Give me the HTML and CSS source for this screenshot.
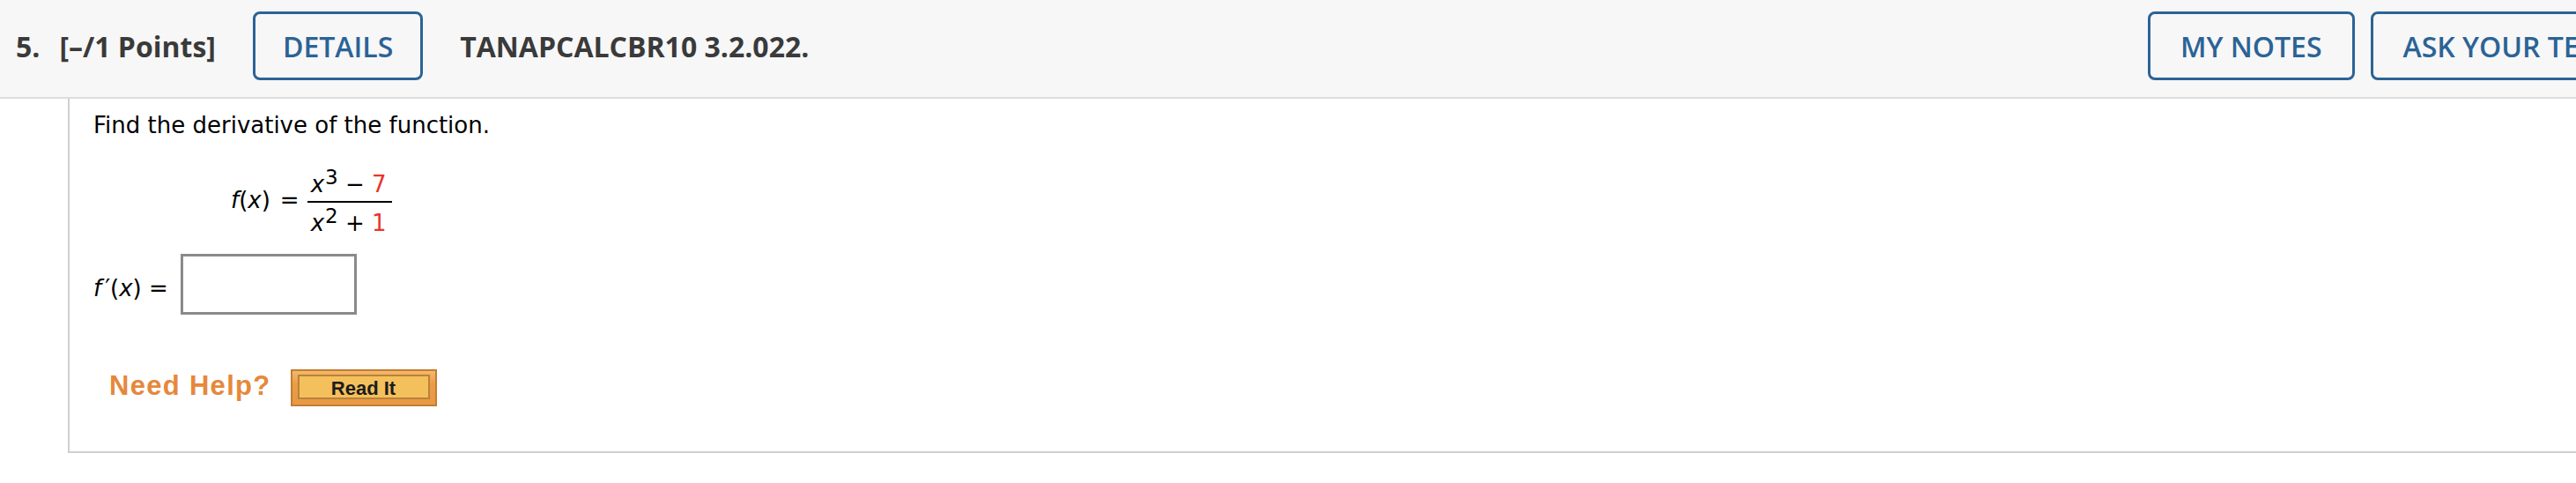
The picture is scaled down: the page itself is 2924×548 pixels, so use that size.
FILE: index.html
```html
<!DOCTYPE html>
<html lang="en">
<head>
<meta charset="utf-8">
<title>Question 5</title>
<link rel="stylesheet" href="styles.css">
</head>
<body>
<div class="page">
  <header class="q-header">
    <div class="q-left">
      <span class="q-num">5.</span>
      <span class="q-points">[–/1 Points]</span>
      <button class="hbtn details" type="button">DETAILS</button>
      <span class="q-code">TANAPCALCBR10 3.2.022.</span>
    </div>
    <div class="q-right">
      <button class="hbtn" type="button">MY NOTES</button>
      <button class="hbtn" type="button">ASK YOUR TEACHER</button>
    </div>
  </header>
  <section class="q-body">
    <p class="prompt">Find the derivative of the function.</p>
    <div class="formula">
      <span class="lhs"><i>f</i>(<i>x</i>)</span>
      <span class="eq">=</span>
      <span class="frac">
        <span class="num"><i>x</i><sup>3</sup> − <span class="rnd">7</span></span>
        <span class="bar"></span>
        <span class="den"><i>x</i><sup>2</sup> + <span class="rnd">1</span></span>
      </span>
    </div>
    <div class="answer-row">
      <span class="ans-label"><i>f</i><span class="prime">′</span>(<i>x</i>) =</span>
      <input class="ans-input" type="text" aria-label="answer">
    </div>
    <div class="help-row">
      <span class="need-help">Need Help?</span>
      <span class="read-it"><span class="read-it-inner">Read It</span></span>
    </div>
  </section>
</div>
</body>
</html>
```

FILE: styles.css
```css
html, body {
  margin: 0;
  padding: 0;
  background: #ffffff;
  overflow: hidden;
}

.page {
  width: 3200px;
}

.q-header {
  display: flex;
  align-items: center;
  height: 78px;
  padding: 13px 0 19px 18px;
  background: #f7f7f7;
  border-bottom: 2px solid #dddddd;
  font-family: "Open Sans", "DejaVu Sans", sans-serif;
  font-size: 32px;
  color: #3a3a3a;
}

.q-left {
  display: flex;
  align-items: center;
  flex: 0 0 2420px;
}

.q-right {
  display: flex;
  align-items: center;
  gap: 18px;
}

.q-num,
.q-points,
.q-code {
  font-weight: 700;
  white-space: nowrap;
}

.q-points {
  margin-left: 22px;
}

.hbtn {
  display: flex;
  align-items: center;
  height: 78px;
  box-sizing: border-box;
  margin: 0;
  padding: 0 34px;
  border: 3px solid #2b6396;
  border-radius: 8px;
  background: transparent;
  color: #2b6396;
  font-family: "Open Sans", "DejaVu Sans", sans-serif;
  font-size: 32px;
  font-weight: 600;
  white-space: nowrap;
}

.details {
  margin-left: 42px;
  padding: 0 31px;
}

.q-code {
  margin-left: 42px;
}

.q-body {
  margin-left: 77px;
  border-left: 2px solid #cfcfcf;
  border-bottom: 2px solid #cfcfcf;
  padding: 14px 0 51px 27px;
  font-family: "DejaVu Sans", Verdana, sans-serif;
  font-size: 26px;
  line-height: 30px;
  color: #000000;
}

.prompt {
  margin: 0;
  padding-top: 1px;
}

.formula {
  display: flex;
  align-items: flex-start;
  margin: 37px 0 0 156px;
}

.lhs {
  margin-top: 18px;
}

.eq {
  margin: 18px 9px 0 11px;
}

.frac {
  display: flex;
  flex-direction: column;
  text-align: center;
}

.num,
.den {
  display: block;
  padding: 0 6px 0 4px;
  white-space: nowrap;
}

.num {
  margin-bottom: 4px;
}

.bar {
  display: block;
  height: 2px;
  background: #000000;
}

.den {
  margin-top: 8px;
}

sup {
  font-size: 23px;
  line-height: 0;
  vertical-align: 9px;
  margin-left: 1px;
}

.rnd {
  color: #e8352b;
}

.answer-row {
  display: flex;
  align-items: flex-start;
  margin-top: 20px;
}

.ans-label {
  margin-top: 24px;
  margin-right: 14px;
  white-space: nowrap;
}

.prime {
  margin-left: 4px;
}

.ans-input {
  width: 200px;
  height: 69px;
  box-sizing: border-box;
  margin: 0;
  padding: 0;
  border: 3px solid #8a8a8a;
  background: #ffffff;
}

.help-row {
  display: flex;
  align-items: flex-start;
  margin-top: 62px;
}

.need-help {
  margin: 4px 0 0 18px;
  font-family: "Liberation Sans", Arial, sans-serif;
  font-weight: 700;
  font-size: 31px;
  line-height: 30px;
  letter-spacing: 1.3px;
  color: #e6883b;
  white-space: nowrap;
}

.read-it {
  display: flex;
  width: 166px;
  height: 42px;
  box-sizing: border-box;
  margin-left: 22px;
  padding: 4px 6px 6px;
  border: 2px solid #c27d34;
  background: linear-gradient(#f4b86a, #eb9c45 40%, #e99843);
}

.read-it-inner {
  display: flex;
  flex: 1;
  align-items: center;
  justify-content: center;
  padding-top: 3px;
  border: 2px solid #b9823c;
  background: #f4c05c;
  font-family: "Liberation Sans", Arial, sans-serif;
  font-weight: 700;
  font-size: 22px;
  line-height: 1;
  color: #1c1c1c;
}
```
